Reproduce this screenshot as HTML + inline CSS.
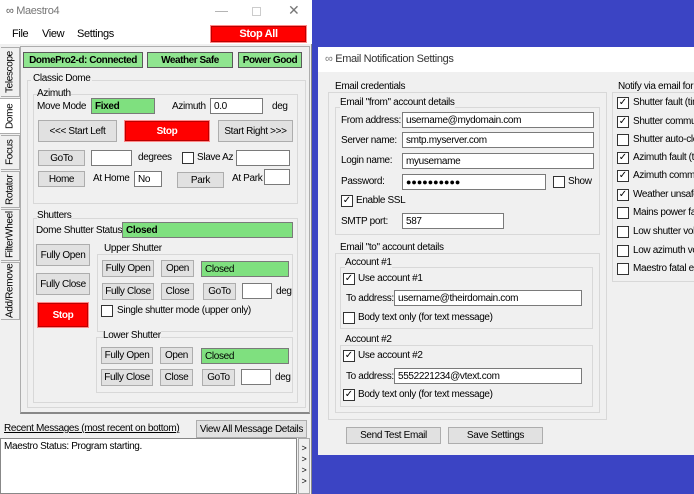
<!DOCTYPE html><html><head><style>
*{box-sizing:border-box;margin:0;padding:0}
body{width:694px;height:494px;overflow:hidden;background:#3b44c4;font-family:"Liberation Sans",sans-serif;font-size:10px;letter-spacing:-0.35px;color:#000;position:relative}
.a{position:absolute;white-space:nowrap}
.b{position:absolute;background:#e1e1e1;border:1px solid #adadad;display:flex;align-items:center;justify-content:center;white-space:nowrap}
.r{position:absolute;background:#f00;border:1px solid #b00;color:#fff;font-weight:bold;display:flex;align-items:center;justify-content:center;box-shadow:0 0 0 1px #f88}
.i{position:absolute;background:#fff;border:1px solid #7a7a7a;padding-left:3px;display:flex;align-items:center;white-space:nowrap}
.g{position:absolute;background:#7fe07f;border:1px solid #7a7a7a;padding-left:3px;display:flex;align-items:center;font-weight:bold}
.gs{position:absolute;background:#8fe58f;border:1px solid #5a5a5a;font-weight:bold;display:flex;align-items:center;justify-content:center;white-space:nowrap;letter-spacing:-0.45px}
.f{position:absolute;border:1px solid #d8d8d8}
.c{position:absolute;width:12px;height:12px;border:1px solid #333;background:#fff;font-size:10px;line-height:10px;text-align:center;letter-spacing:0}
.t{position:absolute;writing-mode:vertical-rl;transform:rotate(180deg);text-align:center;border:1px solid #adadad;border-right:none;background:#f0f0f0;display:flex;align-items:center;justify-content:center;white-space:nowrap}
</style></head><body>
<div class="a" style="left:0;top:0;width:312px;height:494px;background:#f0f0f0;border-right:1px solid #888"></div>
<div class="a" style="left:0;top:0;width:312px;height:22px;background:#fff"></div>
<div class="a" style="left:6px;top:5px;color:#555;font-size:11px">∞ <span style="color:#777">Maestro4</span></div>
<div class="a" style="left:215px;top:3px;color:#aaa;font-size:13px">—</div>
<div class="a" style="left:252px;top:7px;width:9px;height:9px;border:1px solid #ccc"></div>
<div class="a" style="left:288px;top:2px;color:#777;font-size:14px">✕</div>
<div class="a" style="left:0;top:22px;width:312px;height:22px;background:#fff"></div>
<div class="a" style="left:12px;top:28px;font-size:11px">File</div>
<div class="a" style="left:42px;top:28px;font-size:11px">View</div>
<div class="a" style="left:77px;top:28px;font-size:11px">Settings</div>
<div class="r" style="left:211px;top:26px;width:95px;height:16px;font-size:11px">Stop All</div>
<div class="t" style="left:1px;top:47px;width:19px;height:50px">Telescope</div>
<div class="t" style="left:0;top:98px;width:21px;height:36px;background:#fff">Dome</div>
<div class="t" style="left:1px;top:135px;width:19px;height:35px">Focus</div>
<div class="t" style="left:1px;top:171px;width:19px;height:37px">Rotator</div>
<div class="t" style="left:1px;top:209px;width:19px;height:52px">FilterWheel</div>
<div class="t" style="left:1px;top:262px;width:19px;height:58px">Add/Remove</div>
<div class="a" style="left:20px;top:46px;width:290px;height:368px;border:1px solid #adadad;background:#f0f0f0;border-bottom:2px solid #888"></div>
<div class="gs" style="left:23px;top:52px;width:120px;height:16px">DomePro2-d: Connected</div>
<div class="gs" style="left:147px;top:52px;width:86px;height:16px">Weather Safe</div>
<div class="gs" style="left:238px;top:52px;width:64px;height:16px">Power Good</div>
<div class="f" style="left:27px;top:80px;width:279px;height:328px"></div>
<div class="a" style="left:31px;top:73px;background:#f0f0f0;padding:0 2px">Classic Dome</div>
<div class="f" style="left:33px;top:94px;width:265px;height:110px"></div>
<div class="a" style="left:37px;top:88px;background:#f0f0f0">Azimuth</div>
<div class="a" style="left:37px;top:101px">Move Mode</div>
<div class="g" style="left:91px;top:98px;width:64px;height:16px">Fixed</div>
<div class="a" style="left:172px;top:101px">Azimuth</div>
<div class="i" style="left:210px;top:98px;width:53px;height:16px">0.0</div>
<div class="a" style="left:272px;top:101px">deg</div>
<div class="b" style="left:38px;top:120px;width:79px;height:22px">&lt;&lt;&lt; Start Left</div>
<div class="r" style="left:125px;top:121px;width:84px;height:20px">Stop</div>
<div class="b" style="left:218px;top:120px;width:75px;height:22px">Start Right &gt;&gt;&gt;</div>
<div class="b" style="left:38px;top:150px;width:47px;height:16px">GoTo</div>
<div class="i" style="left:91px;top:150px;width:41px;height:16px"></div>
<div class="a" style="left:138px;top:152px">degrees</div>
<div class="c" style="left:182px;top:152px"></div>
<div class="a" style="left:197px;top:152px">Slave Az</div>
<div class="i" style="left:236px;top:150px;width:54px;height:16px"></div>
<div class="b" style="left:38px;top:171px;width:47px;height:16px">Home</div>
<div class="a" style="left:93px;top:173px">At Home</div>
<div class="i" style="left:134px;top:171px;width:28px;height:16px">No</div>
<div class="b" style="left:177px;top:172px;width:47px;height:16px">Park</div>
<div class="a" style="left:232px;top:173px">At Park</div>
<div class="i" style="left:264px;top:169px;width:26px;height:16px"></div>
<div class="f" style="left:33px;top:218px;width:265px;height:185px"></div>
<div class="a" style="left:37px;top:210px;background:#f0f0f0">Shutters</div>
<div class="a" style="left:36px;top:225px">Dome Shutter Status</div>
<div class="g" style="left:122px;top:222px;width:171px;height:16px">Closed</div>
<div class="b" style="left:36px;top:244px;width:54px;height:22px">Fully Open</div>
<div class="b" style="left:36px;top:273px;width:54px;height:22px">Fully Close</div>
<div class="r" style="left:38px;top:303px;width:50px;height:24px">Stop</div>
<div class="f" style="left:97px;top:254px;width:196px;height:78px"></div>
<div class="a" style="left:104px;top:243px;background:#f0f0f0">Upper Shutter</div>
<div class="b" style="left:102px;top:260px;width:52px;height:17px">Fully Open</div>
<div class="b" style="left:161px;top:260px;width:33px;height:17px">Open</div>
<div class="g" style="left:201px;top:261px;width:88px;height:16px;font-weight:normal">Closed</div>
<div class="b" style="left:102px;top:283px;width:52px;height:17px">Fully Close</div>
<div class="b" style="left:161px;top:283px;width:33px;height:17px">Close</div>
<div class="b" style="left:203px;top:283px;width:33px;height:17px">GoTo</div>
<div class="i" style="left:242px;top:283px;width:30px;height:16px"></div>
<div class="a" style="left:276px;top:286px">deg</div>
<div class="c" style="left:101px;top:305px"></div>
<div class="a" style="left:117px;top:305px">Single shutter mode (upper only)</div>
<div class="f" style="left:96px;top:337px;width:197px;height:56px"></div>
<div class="a" style="left:103px;top:330px;background:#f0f0f0">Lower Shutter</div>
<div class="b" style="left:101px;top:347px;width:52px;height:17px">Fully Open</div>
<div class="b" style="left:160px;top:347px;width:33px;height:17px">Open</div>
<div class="g" style="left:201px;top:348px;width:88px;height:16px;font-weight:normal">Closed</div>
<div class="b" style="left:101px;top:369px;width:52px;height:17px">Fully Close</div>
<div class="b" style="left:160px;top:369px;width:33px;height:17px">Close</div>
<div class="b" style="left:202px;top:369px;width:33px;height:17px">GoTo</div>
<div class="i" style="left:241px;top:369px;width:30px;height:16px"></div>
<div class="a" style="left:275px;top:372px">deg</div>
<div class="a" style="left:4px;top:423px;text-decoration:underline">Recent Messages (most recent on bottom)</div>
<div class="b" style="left:196px;top:420px;width:111px;height:18px">View All Message Details</div>
<div class="a" style="left:0;top:438px;width:297px;height:56px;background:#fff;border:1px solid #888;padding:2px 3px">Maestro Status: Program starting.</div>
<div class="a" style="left:298px;top:438px;width:12px;height:56px;border:1px solid #aaa;background:#f0f0f0;font-size:9px;line-height:11px;text-align:center;padding-top:4px;white-space:normal">&gt; &gt; &gt; &gt;</div>
<div class="a" style="left:318px;top:47px;width:376px;height:408px;background:#f0f0f0"></div>
<div class="a" style="left:318px;top:47px;width:376px;height:25px;background:#fff"></div>
<div class="a" style="left:325px;top:53px;font-size:11px;color:#333"><span style="color:#777">∞</span> Email Notification Settings</div>
<div class="f" style="left:328px;top:92px;width:279px;height:328px"></div>
<div class="a" style="left:335px;top:81px;background:#f0f0f0">Email credentials</div>
<div class="f" style="left:335px;top:107px;width:265px;height:128px"></div>
<div class="a" style="left:340px;top:97px;background:#f0f0f0">Email "from" account details</div>
<div class="a" style="left:341px;top:115px">From address:</div>
<div class="i" style="left:402px;top:112px;width:192px;height:16px">username@mydomain.com</div>
<div class="a" style="left:341px;top:135px">Server name:</div>
<div class="i" style="left:402px;top:132px;width:192px;height:16px">smtp.myserver.com</div>
<div class="a" style="left:341px;top:155px">Login name:</div>
<div class="i" style="left:402px;top:153px;width:192px;height:16px">myusername</div>
<div class="a" style="left:341px;top:176px">Password:</div>
<div class="i" style="left:402px;top:174px;width:144px;height:16px;font-size:9px;letter-spacing:0">●●●●●●●●●●</div>
<div class="c" style="left:553px;top:176px"></div>
<div class="a" style="left:568px;top:176px">Show</div>
<div class="c" style="left:341px;top:195px">✓</div>
<div class="a" style="left:356px;top:195px">Enable SSL</div>
<div class="a" style="left:341px;top:216px">SMTP port:</div>
<div class="i" style="left:402px;top:213px;width:102px;height:16px">587</div>
<div class="f" style="left:335px;top:253px;width:265px;height:160px"></div>
<div class="a" style="left:340px;top:242px;background:#f0f0f0">Email "to" account details</div>
<div class="f" style="left:340px;top:267px;width:253px;height:62px"></div>
<div class="a" style="left:345px;top:257px;background:#f0f0f0">Account #1</div>
<div class="c" style="left:343px;top:273px">✓</div>
<div class="a" style="left:358px;top:273px">Use account #1</div>
<div class="a" style="left:346px;top:293px">To address:</div>
<div class="i" style="left:394px;top:290px;width:188px;height:16px">username@theirdomain.com</div>
<div class="c" style="left:343px;top:312px"></div>
<div class="a" style="left:358px;top:312px">Body text only (for text message)</div>
<div class="f" style="left:340px;top:345px;width:253px;height:62px"></div>
<div class="a" style="left:345px;top:334px;background:#f0f0f0">Account #2</div>
<div class="c" style="left:343px;top:350px">✓</div>
<div class="a" style="left:358px;top:350px">Use account #2</div>
<div class="a" style="left:346px;top:371px">To address:</div>
<div class="i" style="left:394px;top:368px;width:188px;height:16px">5552221234@vtext.com</div>
<div class="c" style="left:343px;top:389px">✓</div>
<div class="a" style="left:358px;top:389px">Body text only (for text message)</div>
<div class="b" style="left:346px;top:427px;width:95px;height:17px">Send Test Email</div>
<div class="b" style="left:448px;top:427px;width:95px;height:17px">Save Settings</div>
<div class="f" style="left:612px;top:92px;width:90px;height:190px"></div>
<div class="a" style="left:618px;top:81px;background:#f0f0f0">Notify via email for the</div>
<div class="c" style="left:617px;top:97px">✓</div><div class="a" style="left:633px;top:97px">Shutter fault (time</div>
<div class="c" style="left:617px;top:116px">✓</div><div class="a" style="left:633px;top:116px">Shutter communic</div>
<div class="c" style="left:617px;top:134px"></div><div class="a" style="left:633px;top:134px">Shutter auto-close</div>
<div class="c" style="left:617px;top:152px">✓</div><div class="a" style="left:633px;top:152px">Azimuth fault (time</div>
<div class="c" style="left:617px;top:170px">✓</div><div class="a" style="left:633px;top:170px">Azimuth communic</div>
<div class="c" style="left:617px;top:189px">✓</div><div class="a" style="left:633px;top:189px">Weather unsafe</div>
<div class="c" style="left:617px;top:207px"></div><div class="a" style="left:633px;top:207px">Mains power fail</div>
<div class="c" style="left:617px;top:226px"></div><div class="a" style="left:633px;top:226px">Low shutter volta</div>
<div class="c" style="left:617px;top:245px"></div><div class="a" style="left:633px;top:245px">Low azimuth volt</div>
<div class="c" style="left:617px;top:263px"></div><div class="a" style="left:633px;top:263px">Maestro fatal erro</div>
</body></html>
